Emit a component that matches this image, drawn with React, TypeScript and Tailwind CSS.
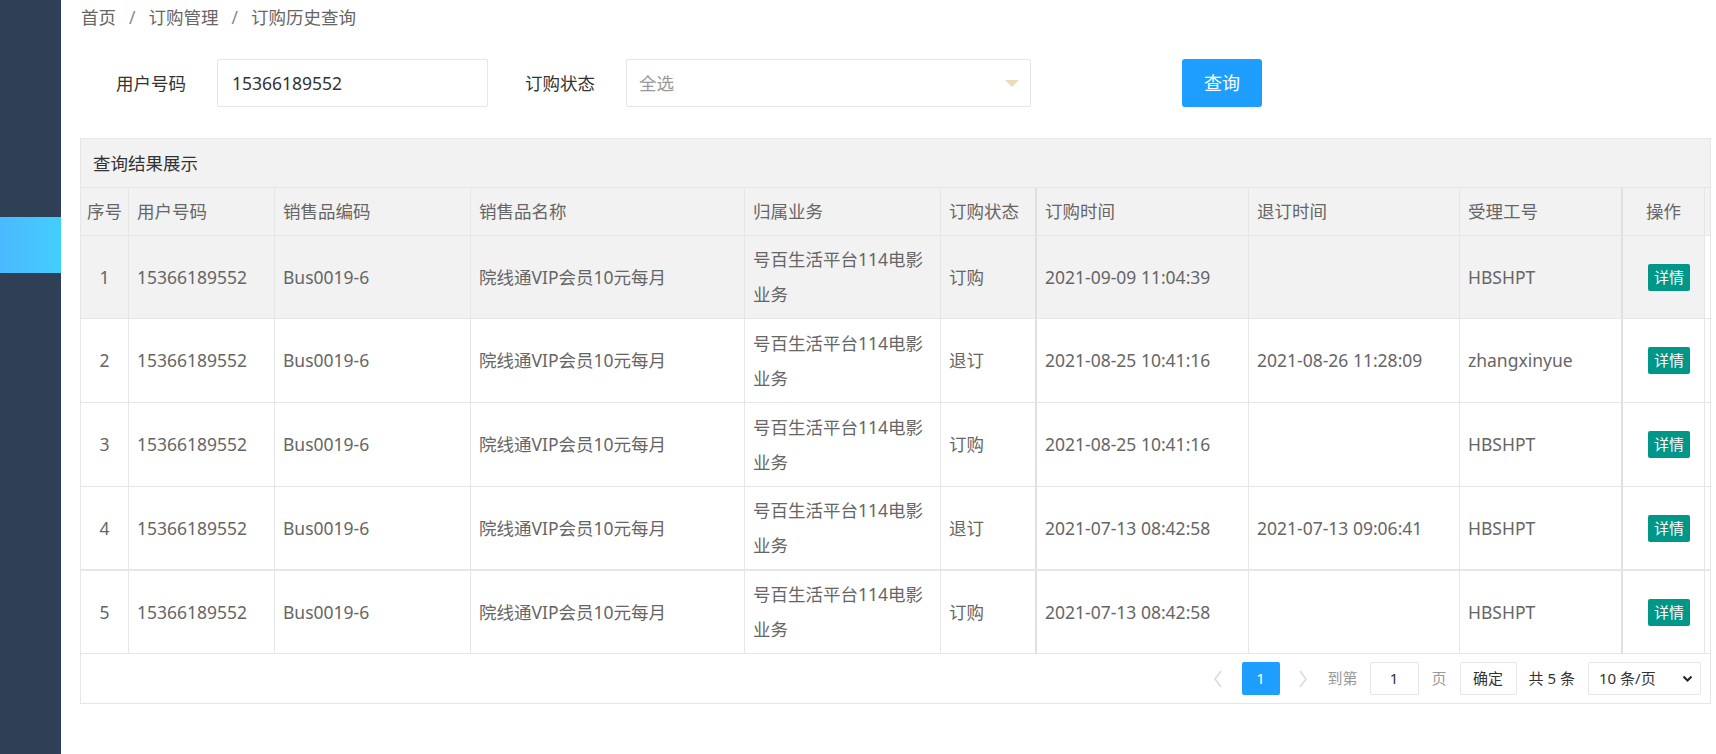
import React from "react";

const FONT = { fontFamily: '"Noto Sans", "Noto Sans CJK SC", sans-serif' };

const GRID =
  "grid grid-cols-[48px_146px_196px_274px_196px_96px_212px_211px_163px_82px_5px]";

type Row = {
  no: string;
  phone: string;
  code: string;
  name: string;
  status: string;
  orderTime: string;
  cancelTime: string;
  staff: string;
  h: string;
  bg: string;
  bb: string;
};

const rows: Row[] = [
  { no: "1", phone: "15366189552", code: "Bus0019-6", name: "院线通VIP会员10元每月", status: "订购", orderTime: "2021-09-09 11:04:39", cancelTime: "", staff: "HBSHPT", h: "h-[83px]", bg: "bg-[#f2f2f2]", bb: "border-b" },
  { no: "2", phone: "15366189552", code: "Bus0019-6", name: "院线通VIP会员10元每月", status: "退订", orderTime: "2021-08-25 10:41:16", cancelTime: "2021-08-26 11:28:09", staff: "zhangxinyue", h: "h-[84px]", bg: "bg-white", bb: "border-b" },
  { no: "3", phone: "15366189552", code: "Bus0019-6", name: "院线通VIP会员10元每月", status: "订购", orderTime: "2021-08-25 10:41:16", cancelTime: "", staff: "HBSHPT", h: "h-[84px]", bg: "bg-white", bb: "border-b" },
  { no: "4", phone: "15366189552", code: "Bus0019-6", name: "院线通VIP会员10元每月", status: "退订", orderTime: "2021-07-13 08:42:58", cancelTime: "2021-07-13 09:06:41", staff: "HBSHPT", h: "h-[84px]", bg: "bg-white", bb: "border-b-2" },
  { no: "5", phone: "15366189552", code: "Bus0019-6", name: "院线通VIP会员10元每月", status: "订购", orderTime: "2021-07-13 08:42:58", cancelTime: "", staff: "HBSHPT", h: "h-[83px]", bg: "bg-white", bb: "border-b" },
];

const cell = "flex items-center border-r border-[#e6e6e6] pl-[8px] pr-[8px] overflow-hidden whitespace-nowrap";

export default function App() {
  return (
    <div className="flex w-[1716px] h-[754px] bg-white overflow-hidden text-[#666]" style={FONT}>
      {/* Sidebar */}
      <div className="w-[61px] shrink-0 h-full bg-[#2f4056] flex flex-col">
        <div className="h-[217px]" />
        <div className="h-[56px] bg-gradient-to-r from-[#4bb8ff] to-[#42ceff]" />
      </div>

      {/* Content */}
      <div className="flex-1 pl-[19px] pr-[5px]">
        {/* Breadcrumb */}
        <div className="h-[35px] leading-[35px] text-[17.5px] text-[#666] pl-[1px] flex">
          <span>首页</span>
          <span className="mx-[13px] text-[#888]">/</span>
          <span>订购管理</span>
          <span className="mx-[13px] text-[#888]">/</span>
          <span>订购历史查询</span>
        </div>

        {/* Form row */}
        <div className="mt-[24px] flex items-center h-[48px]">
          <div className="w-[106px] text-right text-[17.5px] text-[#333]">用户号码</div>
          <div className="ml-[31px] w-[271px] h-[48px] border border-[#e6e6e6] rounded-[2px] flex items-center pl-[14px] text-[17.5px] text-[#333]">
            15366189552
          </div>
          <div className="ml-[37px] w-[72px] text-[17.5px] text-[#333] whitespace-nowrap">订购状态</div>
          <div className="ml-[29px] w-[405px] h-[48px] border border-[#e6e6e6] rounded-[2px] flex items-center justify-between pl-[12px] pr-[11px] text-[17.5px] text-[#999]">
            <span>全选</span>
            <span className="w-0 h-0 border-t-[7px] border-t-[#e9dcb6] border-x-[7.5px] border-x-transparent" />
          </div>
          <button className="ml-[151px] w-[80px] h-[48px] rounded-[3px] bg-[#1e9fff] text-white text-[18px]">
            查询
          </button>
        </div>

        {/* Panel */}
        <div className="mt-[31px] w-[1631px] border border-[#e6e6e6]">
          <div className="h-[49px] bg-[#f2f2f2] border-b border-[#e6e6e6] flex items-center pl-[12px] text-[17.5px] text-[#333]">
            查询结果展示
          </div>

          {/* Header */}
          <div className={`${GRID} h-[48px] bg-[#f2f2f2] border-b border-[#e6e6e6] text-[17.5px] text-[#666]`}>
            <div className={`${cell} justify-center pl-0 pr-0`}>序号</div>
            <div className={cell}>用户号码</div>
            <div className={cell}>销售品编码</div>
            <div className={cell}>销售品名称</div>
            <div className={cell}>归属业务</div>
            <div className={`${cell} border-r-2 border-r-[#e0e0e0]`}>订购状态</div>
            <div className={cell}>订购时间</div>
            <div className={cell}>退订时间</div>
            <div className={`${cell} border-r-2 border-r-[#e0e0e0]`}>受理工号</div>
            <div className={`${cell} justify-center pl-0 pr-0`}>操作</div>
            <div className="bg-[#f2f2f2]" />
          </div>

          {/* Body */}
          {rows.map((r) => (
            <div key={r.no} className={`${GRID} ${r.h} ${r.bb} border-[#e6e6e6] text-[17.5px] text-[#666]`}>
              <div className={`${cell} ${r.bg} justify-center pl-0 pr-0`}>{r.no}</div>
              <div className={`${cell} ${r.bg}`}>{r.phone}</div>
              <div className={`${cell} ${r.bg}`}>{r.code}</div>
              <div className={`${cell} ${r.bg}`}>{r.name}</div>
              <div className={`${cell} ${r.bg} leading-[35px]`}>
                <div>
                  <div>号百生活平台114电影</div>
                  <div>业务</div>
                </div>
              </div>
              <div className={`${cell} ${r.bg} border-r-2 border-r-[#e0e0e0]`}>{r.status}</div>
              <div className={`${cell} ${r.bg}`}>{r.orderTime}</div>
              <div className={`${cell} ${r.bg}`}>{r.cancelTime}</div>
              <div className={`${cell} ${r.bg} border-r-2 border-r-[#e0e0e0]`}>{r.staff}</div>
              <div className={`${cell} ${r.bg} pl-[25px] pr-0`}>
                <span className="w-[42px] h-[27px] rounded-[2px] bg-[#009688] text-white text-[15px] flex items-center justify-center">
                  详情
                </span>
              </div>
              <div className="bg-white" />
            </div>
          ))}

          {/* Pagination */}
          <div className="h-[49px] flex items-center justify-end pr-[9px] text-[15px]">
            <div className="w-[40px] h-[33px] flex items-center justify-center">
              <svg width="10" height="18" viewBox="0 0 10 18" fill="none">
                <path d="M8 1 L2 9 L8 17" stroke="#d9d9d9" strokeWidth="1.5" />
              </svg>
            </div>
            <div className="ml-[4px] w-[38px] h-[33px] rounded-[2px] bg-[#1e9fff] text-white flex items-center justify-center">
              1
            </div>
            <div className="ml-[4px] w-[38px] h-[33px] flex items-center justify-center">
              <svg width="10" height="18" viewBox="0 0 10 18" fill="none">
                <path d="M2 1 L8 9 L2 17" stroke="#d9d9d9" strokeWidth="1.5" />
              </svg>
            </div>
            <span className="ml-[6px] text-[#999]">到第</span>
            <div className="ml-[12px] w-[49px] h-[33px] border border-[#e6e6e6] rounded-[2px] flex items-center justify-center text-[#333]">
              1
            </div>
            <span className="ml-[13px] text-[#999]">页</span>
            <div className="ml-[13px] w-[57px] h-[33px] border border-[#e6e6e6] rounded-[2px] flex items-center justify-center text-[#333]">
              确定
            </div>
            <span className="ml-[12px] text-[#333] whitespace-nowrap">共 5 条</span>
            <div className="ml-[13px] w-[113px] h-[33px] border border-[#e6e6e6] rounded-[2px] flex items-center justify-between pl-[10px] pr-[7px] text-[#333]">
              <span className="whitespace-nowrap">10 条/页</span>
              <svg width="11" height="8" viewBox="0 0 11 8" fill="none">
                <path d="M1.5 1.5 L5.5 5.5 L9.5 1.5" stroke="#222" strokeWidth="2" />
              </svg>
            </div>
          </div>
        </div>
      </div>
    </div>
  );
}
